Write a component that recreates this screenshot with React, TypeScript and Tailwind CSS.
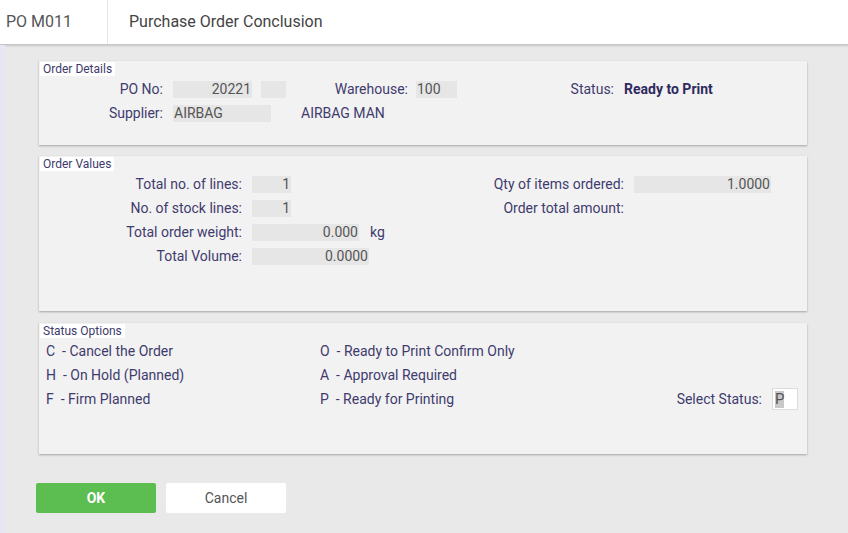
import React from "react";

const font = { fontFamily: "Roboto, 'Noto Sans', sans-serif" };

function Legend({ children }: { children: React.ReactNode }) {
  return (
    <div className="absolute left-[1px] top-[1px] bg-white px-[3px] text-[12px] leading-[14px] text-[#3d3a6b]">
      {children}
    </div>
  );
}

function Field({ w, children, align = "right" }: { w: string; children?: React.ReactNode; align?: "left" | "right" }) {
  return (
    <div
      className={`${w} h-[17px] bg-[#e6e6e6] px-[1px] text-[14px] leading-[17px] text-[#555] ${align === "right" ? "text-right" : "text-left"}`}
    >
      {children}
    </div>
  );
}

export default function App() {
  return (
    <div style={font} className="flex h-[533px] w-[848px] flex-col bg-[#e9e9e9]">
      <header className="flex h-[45px] shrink-0 items-stretch border-b border-[#c6c6c6] bg-white shadow-[0_1px_2px_rgba(0,0,0,0.15)]">
        <div className="flex w-[108px] items-center border-r border-[#e6e6e6] pl-[6px] text-[16px] text-[#555]">PO M011</div>
        <div className="flex items-center pl-[21px] text-[16px] text-[#444]">Purchase Order Conclusion</div>
      </header>
      <div className="flex flex-1">
        <div className="w-[5px] bg-[#e8e6f0]" />
        <main className="flex flex-1 flex-col pl-[34px] pt-[16px] text-[14px] leading-[17px] text-[#3f3b6e]">
          {/* Order Details */}
          <section className="relative h-[84px] w-[768px] bg-[#f2f2f2] shadow-[0_1px_2px_rgba(0,0,0,0.3)]">
            <Legend>Order Details</Legend>
            <div className="flex flex-col gap-[7px] pt-[20px]">
              <div className="flex h-[17px] items-center">
                <div className="w-[124px] text-right">PO No:</div>
                <div className="ml-[10px]">
                  <Field w="w-[79px]">20221</Field>
                </div>
                <div className="ml-[9px]">
                  <Field w="w-[25px]" />
                </div>
                <div className="w-[122px] text-right">Warehouse:</div>
                <div className="ml-[8px]">
                  <Field w="w-[41px]" align="left">100</Field>
                </div>
                <div className="w-[157px] text-right">Status:</div>
                <div className="ml-[10px] font-bold text-[#2f2a5e]">Ready to Print</div>
              </div>
              <div className="flex h-[17px] items-center">
                <div className="w-[124px] text-right">Supplier:</div>
                <div className="ml-[10px]">
                  <Field w="w-[98px]" align="left">AIRBAG</Field>
                </div>
                <div className="ml-[30px]">AIRBAG MAN</div>
              </div>
            </div>
          </section>

          {/* Order Values */}
          <section className="relative mt-[11px] h-[155px] w-[768px] bg-[#f2f2f2] shadow-[0_1px_2px_rgba(0,0,0,0.3)]">
            <Legend>Order Values</Legend>
            <div className="flex pt-[20px]">
              <div className="flex w-[400px] flex-col gap-[7px]">
                <div className="flex h-[17px] items-center">
                  <div className="w-[203px] text-right">Total no. of lines:</div>
                  <div className="ml-[10px]"><Field w="w-[39px]">1</Field></div>
                </div>
                <div className="flex h-[17px] items-center">
                  <div className="w-[203px] text-right">No. of stock lines:</div>
                  <div className="ml-[10px]"><Field w="w-[39px]">1</Field></div>
                </div>
                <div className="flex h-[17px] items-center">
                  <div className="w-[203px] text-right">Total order weight:</div>
                  <div className="ml-[10px]"><Field w="w-[107px]">0.000</Field></div>
                  <div className="ml-[11px]">kg</div>
                </div>
                <div className="flex h-[17px] items-center">
                  <div className="w-[203px] text-right">Total Volume:</div>
                  <div className="ml-[10px]"><Field w="w-[117px]">0.0000</Field></div>
                </div>
              </div>
              <div className="flex flex-col gap-[7px]">
                <div className="flex h-[17px] items-center">
                  <div className="w-[185px] text-right">Qty of items ordered:</div>
                  <div className="ml-[10px]"><Field w="w-[137px]">1.0000</Field></div>
                </div>
                <div className="flex h-[17px] items-center">
                  <div className="w-[185px] text-right">Order total amount:</div>
                </div>
              </div>
            </div>
          </section>

          {/* Status Options */}
          <section className="relative mt-[12px] h-[131px] w-[768px] bg-[#f2f2f2] shadow-[0_1px_2px_rgba(0,0,0,0.3)]">
            <Legend>Status Options</Legend>
            <div className="flex pl-[7px] pt-[20px]">
              <div className="flex w-[274px] flex-col gap-[7px]">
                <div className="h-[17px] whitespace-pre">C  - Cancel the Order</div>
                <div className="h-[17px] whitespace-pre">H  - On Hold (Planned)</div>
                <div className="h-[17px] whitespace-pre">F  - Firm Planned</div>
              </div>
              <div className="flex w-[300px] flex-col gap-[7px]">
                <div className="h-[17px] whitespace-pre">O  - Ready to Print Confirm Only</div>
                <div className="h-[17px] whitespace-pre">A  - Approval Required</div>
                <div className="h-[17px] whitespace-pre">P  - Ready for Printing</div>
              </div>
              <div className="flex flex-1 items-end justify-end pr-[9px]">
                <div className="-mb-[2px] flex items-center">
                  <span>Select Status:</span>
                  <div className="ml-[10px] flex h-[22px] w-[26px] items-center border border-[#dcdcdc] bg-white pl-[2px]">
                    <span className="bg-[#c8c8c8] text-[15px] leading-[17px] text-[#555]">P</span>
                  </div>
                </div>
              </div>
            </div>
          </section>

          {/* Buttons */}
          <div className="mt-[29px] -ml-[3px] flex gap-[10px]">
            <button className="h-[30px] w-[120px] rounded-[2px] bg-[#5cbd51] text-[14px] font-bold text-white">OK</button>
            <button className="h-[30px] w-[120px] rounded-[2px] bg-white text-[14px] text-[#555]">Cancel</button>
          </div>
        </main>
      </div>
    </div>
  );
}
